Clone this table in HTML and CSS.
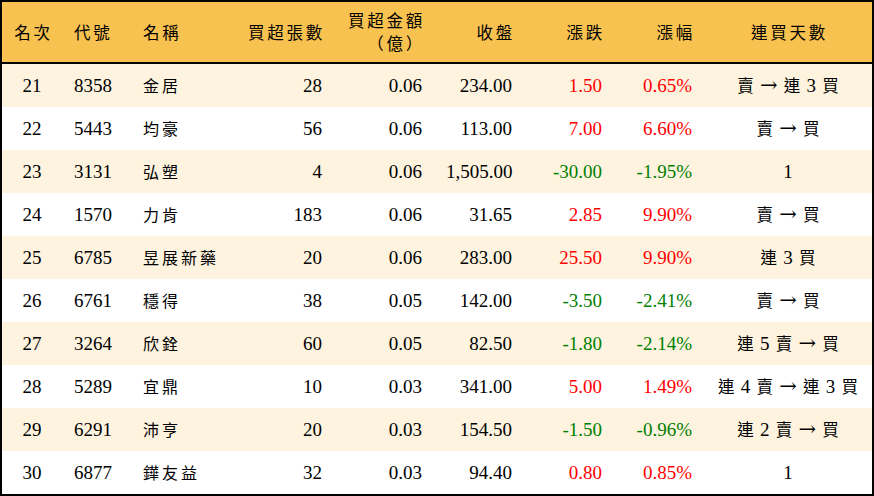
FILE: index.html
```html
<!DOCTYPE html>
<html lang="zh-Hant">
<head>
<meta charset="utf-8">
<title>買超排行</title>
<link rel="stylesheet" href="styles.css">
</head>
<body>
<div class="board">
  <div class="row head">
    <div class="cell center cjk">名次</div>
    <div class="cell left cjk">代號</div>
    <div class="cell left cjk">名稱</div>
    <div class="cell right cjk">買超張數</div>
    <div class="cell right cjk two"><span>買超金額</span><span>（億）</span></div>
    <div class="cell right cjk">收盤</div>
    <div class="cell right cjk">漲跌</div>
    <div class="cell right cjk">漲幅</div>
    <div class="cell center cjk">連買天數</div>
  </div>

  <div class="row alt">
    <div class="cell center">21</div><div class="cell left">8358</div><div class="cell left cjk">金居</div>
    <div class="cell right">28</div><div class="cell right">0.06</div><div class="cell right">234.00</div>
    <div class="cell right up">1.50</div><div class="cell right up">0.65%</div>
    <div class="cell center days"><span class="c">賣</span> <span class="arrow">→</span> <span class="c">連</span> 3 <span class="c">買</span></div>
  </div>
  <div class="row">
    <div class="cell center">22</div><div class="cell left">5443</div><div class="cell left cjk">均豪</div>
    <div class="cell right">56</div><div class="cell right">0.06</div><div class="cell right">113.00</div>
    <div class="cell right up">7.00</div><div class="cell right up">6.60%</div>
    <div class="cell center days"><span class="c">賣</span> <span class="arrow">→</span> <span class="c">買</span></div>
  </div>
  <div class="row alt">
    <div class="cell center">23</div><div class="cell left">3131</div><div class="cell left cjk">弘塑</div>
    <div class="cell right">4</div><div class="cell right">0.06</div><div class="cell right">1,505.00</div>
    <div class="cell right down">-30.00</div><div class="cell right down">-1.95%</div>
    <div class="cell center days">1</div>
  </div>
  <div class="row">
    <div class="cell center">24</div><div class="cell left">1570</div><div class="cell left cjk">力肯</div>
    <div class="cell right">183</div><div class="cell right">0.06</div><div class="cell right">31.65</div>
    <div class="cell right up">2.85</div><div class="cell right up">9.90%</div>
    <div class="cell center days"><span class="c">賣</span> <span class="arrow">→</span> <span class="c">買</span></div>
  </div>
  <div class="row alt">
    <div class="cell center">25</div><div class="cell left">6785</div><div class="cell left cjk">昱展新藥</div>
    <div class="cell right">20</div><div class="cell right">0.06</div><div class="cell right">283.00</div>
    <div class="cell right up">25.50</div><div class="cell right up">9.90%</div>
    <div class="cell center days"><span class="c">連</span> 3 <span class="c">買</span></div>
  </div>
  <div class="row">
    <div class="cell center">26</div><div class="cell left">6761</div><div class="cell left cjk">穩得</div>
    <div class="cell right">38</div><div class="cell right">0.05</div><div class="cell right">142.00</div>
    <div class="cell right down">-3.50</div><div class="cell right down">-2.41%</div>
    <div class="cell center days"><span class="c">賣</span> <span class="arrow">→</span> <span class="c">買</span></div>
  </div>
  <div class="row alt">
    <div class="cell center">27</div><div class="cell left">3264</div><div class="cell left cjk">欣銓</div>
    <div class="cell right">60</div><div class="cell right">0.05</div><div class="cell right">82.50</div>
    <div class="cell right down">-1.80</div><div class="cell right down">-2.14%</div>
    <div class="cell center days"><span class="c">連</span> 5 <span class="c">賣</span> <span class="arrow">→</span> <span class="c">買</span></div>
  </div>
  <div class="row">
    <div class="cell center">28</div><div class="cell left">5289</div><div class="cell left cjk">宜鼎</div>
    <div class="cell right">10</div><div class="cell right">0.03</div><div class="cell right">341.00</div>
    <div class="cell right up">5.00</div><div class="cell right up">1.49%</div>
    <div class="cell center days"><span class="c">連</span> 4 <span class="c">賣</span> <span class="arrow">→</span> <span class="c">連</span> 3 <span class="c">買</span></div>
  </div>
  <div class="row alt">
    <div class="cell center">29</div><div class="cell left">6291</div><div class="cell left cjk">沛亨</div>
    <div class="cell right">20</div><div class="cell right">0.03</div><div class="cell right">154.50</div>
    <div class="cell right down">-1.50</div><div class="cell right down">-0.96%</div>
    <div class="cell center days"><span class="c">連</span> 2 <span class="c">賣</span> <span class="arrow">→</span> <span class="c">買</span></div>
  </div>
  <div class="row">
    <div class="cell center">30</div><div class="cell left">6877</div><div class="cell left cjk">鏵友益</div>
    <div class="cell right">32</div><div class="cell right">0.03</div><div class="cell right">94.40</div>
    <div class="cell right up">0.80</div><div class="cell right up">0.85%</div>
    <div class="cell center days">1</div>
  </div>
</div>
</body>
</html>
```

FILE: styles.css
```css
* { box-sizing: border-box; }
html, body { margin: 0; padding: 0; background: #fff; }
body {
  font-family: "Liberation Serif", "Noto Sans CJK TC", serif;
  font-size: 19px;
  color: #000;
}
.board {
  width: 874px;
  height: 496px;
  border: 2px solid #000;
  overflow: hidden;
}
.row {
  display: grid;
  grid-template-columns: 60px 69px 97px 106px 100px 90px 90px 90px 168px;
  height: 43px;
  align-items: center;
  background: #fff;
}
.row.alt { background: #fdf3df; }
.row.head {
  height: 62px;
  background: #f8c250;
  border-bottom: 2px solid #000;
}
.cell {
  padding: 0 12px;
  white-space: nowrap;
  line-height: 21px;
}
.cell.left { text-align: left; }
.cell.right { text-align: right; }
.cell.center { text-align: center; padding: 0; }
.cjk {
  font-family: "Noto Sans CJK TC", sans-serif;
  font-size: 16px;
  letter-spacing: 3px;
}
.head .cjk { font-size: 16.5px; letter-spacing: 2.75px; }
.cell.right.cjk { margin-right: -3px; }
.cell.center.cjk { text-indent: 3px; }
.two {
  display: flex;
  flex-direction: column;
  align-items: flex-end;
  line-height: 23px;
}
.up { color: #ff0000; }
.down { color: #008000; }
.days { word-spacing: 1.5px; }
.c {
  font-family: "Noto Sans CJK TC", sans-serif;
  font-size: 16.5px;
}
.arrow {
  font-family: "DejaVu Serif", serif;
  font-size: 21px;
}
```
